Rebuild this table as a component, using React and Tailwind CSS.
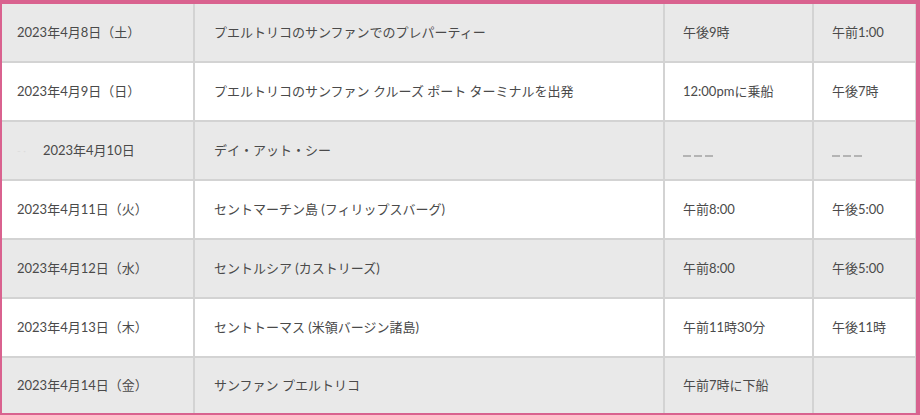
import React from "react";

const rows = [
  ["2023年4月8日（土）", "プエルトリコのサンファンでのプレパーティー", "午後9時", "午前1:00"],
  ["2023年4月9日（日）", "プエルトリコのサンファン クルーズ ポート ターミナルを出発", "12:00pmに乗船", "午後7時"],
  ["2023年4月10日", "デイ・アット・シー", "DASH", "DASH"],
  ["2023年4月11日（火）", "セントマーチン島 (フィリップスバーグ)", "午前8:00", "午後5:00"],
  ["2023年4月12日（水）", "セントルシア (カストリーズ)", "午前8:00", "午後5:00"],
  ["2023年4月13日（木）", "セントトーマス (米領バージン諸島)", "午前11時30分", "午後11時"],
  ["2023年4月14日（金）", "サンファン プエルトリコ", "午前7時に下船", ""],
];

function Dash() {
  return (
    <span className="flex gap-[3px] mt-[11px]">
      <span className="block w-[8px] h-[2px] bg-[#b4b4b4]" />
      <span className="block w-[8px] h-[2px] bg-[#b4b4b4]" />
      <span className="block w-[8px] h-[2px] bg-[#b4b4b4]" />
    </span>
  );
}

export default function App() {
  return (
    <div
      className="w-[920px] h-[415px] overflow-hidden bg-white border-t-4 border-l-2 border-r-4 border-b-2 border-[#d9628f] text-[13px] text-[#4a4a4a]"
      style={{ fontFamily: '"Lato","Noto Sans CJK JP",sans-serif' }}
    >
      {rows.map((r, i) => {
        const last = i === rows.length - 1;
        const bg = i % 2 === 0 ? "bg-[#e9e9e9]" : "bg-white";
        return (
          <div
            key={i}
            className={`flex ${bg} ${last ? "h-[55px]" : "h-[59px] border-b-2 border-[#d3d3d3]"}`}
          >
            <div className="w-[193px] shrink-0 flex items-center pl-[15px] border-r-2 border-[#d3d3d3]">
              {i === 2 ? (
                <>
                  <span className="text-[#dcdcdc] text-[10px] mr-[14px]">‐ ·</span>
                  <span className="ml-[3px]">{r[0]}</span>
                </>
              ) : (
                r[0]
              )}
            </div>
            <div className="w-[470px] shrink-0 flex items-center pl-[19px] border-r-2 border-[#d3d3d3]">
              {r[1]}
            </div>
            <div className="w-[149px] shrink-0 flex items-center pl-[18px] border-r-2 border-[#d3d3d3]">
              {r[2] === "DASH" ? <Dash /> : r[2]}
            </div>
            <div className="flex-1 flex items-center pl-[18px] border-r border-[#d3d3d3]">
              {r[3] === "DASH" ? <Dash /> : r[3]}
            </div>
          </div>
        );
      })}
    </div>
  );
}
